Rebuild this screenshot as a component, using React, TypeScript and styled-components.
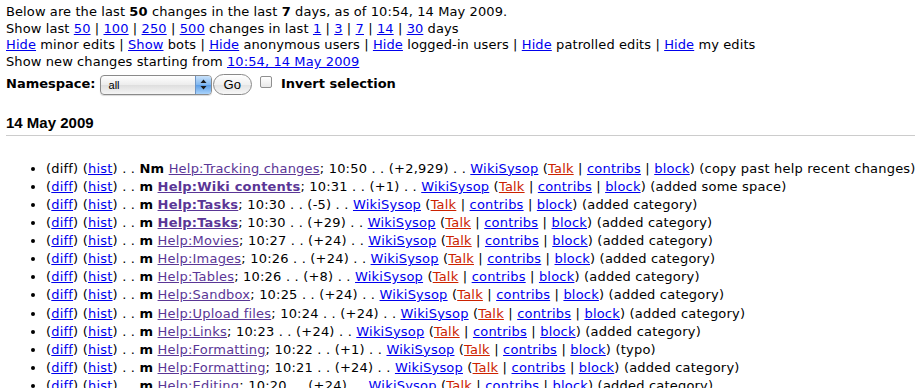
import React from 'react';
import styled, { createGlobalStyle } from 'styled-components';

const GlobalStyle = createGlobalStyle`
  body {
    margin: 0;
    background: #fff;
    font-family: "DejaVu Sans", Verdana, sans-serif;
    color: #000;
  }
`;

const Page = styled.div`
  padding: 4px 6px 0 6px;
  font-size: 13px;
  line-height: 16.7px;
`;

const Line = styled.div`
  white-space: nowrap;
  letter-spacing: 0.1px;
`;

const A = styled.a<{ $kind?: 'visited' | 'new' }>`
  color: ${(p) => (p.$kind === 'visited' ? '#5a3696' : p.$kind === 'new' ? '#cc2200' : '#0000ee')};
  text-decoration: underline;
  cursor: pointer;
`;

const Strong = styled.b`
  font-weight: bold;
`;

const FilterRow = styled.form`
  display: flex;
  align-items: center;
  margin-top: 3px;
  height: 22px;
`;

const Label = styled.label`
  font-weight: bold;
  font-size: 13px;
  margin-right: 4px;
`;

const SelectBox = styled.div`
  display: flex;
  width: 110px;
  height: 18px;
  border: 1px solid #8a8a8a;
  border-radius: 4px;
  overflow: hidden;
  background: linear-gradient(#ffffff, #ececec 50%, #dedede 51%, #f4f4f4);
  box-shadow: 0 1px 1px rgba(0, 0, 0, 0.15);
`;

const SelectText = styled.span`
  flex: 1;
  font-family: "Liberation Sans", Arial, sans-serif;
  font-size: 11px;
  line-height: 19px;
  padding-left: 8px;
`;

const ArrowBox = styled.span`
  width: 15px;
  display: flex;
  align-items: center;
  justify-content: center;
  background: linear-gradient(#c9e2fb, #7fb6ef 50%, #5d9ee6 51%, #a9d3fb);
  border-left: 1px solid #6d94c4;
`;

const GoButton = styled.button`
  height: 21px;
  margin-left: 1px;
  padding: 0 10px;
  border: 1px solid #8a8a8a;
  border-radius: 11px;
  background: linear-gradient(#ffffff, #f0f0f0 50%, #e2e2e2 51%, #f7f7f7);
  font-family: "Liberation Sans", Arial, sans-serif;
  font-size: 13px;
  color: #000;
`;

const Check = styled.span`
  display: inline-block;
  width: 10px;
  height: 10px;
  margin: 0 9px 0 8px;
  border: 1px solid #8f8f8f;
  border-radius: 2px;
  background: linear-gradient(#fff, #e8e8e8);
  position: relative;
  top: -3px;
`;

const CheckLabel = styled.span`
  font-weight: bold;
  font-size: 13px;
`;

const DayHeading = styled.h4`
  margin: 18px 0 0 0;
  font-family: "Liberation Sans", Helvetica, Arial, sans-serif;
  font-size: 15px;
  font-weight: bold;
  line-height: 18px;
  padding-bottom: 3px;
  border-bottom: 1px solid #cccccc;
`;

const ChangeList = styled.ul`
  margin: 24px 0 0 0;
  padding-left: 40px;
  list-style: disc;
  line-height: 18.1px;
`;

const Item = styled.li`
  white-space: nowrap;
  letter-spacing: 0.2px;
`;

type Change = {
  flags: string;
  page: string;
  watched?: boolean;
  time: string;
  diff: string;
  summary: string;
  newPage?: boolean;
};

const changes: Change[] = [
  { flags: 'Nm', page: 'Help:Tracking changes', time: '10:50', diff: '+2,929', summary: 'copy past help recent changes', newPage: true },
  { flags: 'm', page: 'Help:Wiki contents', watched: true, time: '10:31', diff: '+1', summary: 'added some space' },
  { flags: 'm', page: 'Help:Tasks', watched: true, time: '10:30', diff: '-5', summary: 'added category' },
  { flags: 'm', page: 'Help:Tasks', watched: true, time: '10:30', diff: '+29', summary: 'added category' },
  { flags: 'm', page: 'Help:Movies', time: '10:27', diff: '+24', summary: 'added category' },
  { flags: 'm', page: 'Help:Images', time: '10:26', diff: '+24', summary: 'added category' },
  { flags: 'm', page: 'Help:Tables', time: '10:26', diff: '+8', summary: 'added category' },
  { flags: 'm', page: 'Help:Sandbox', time: '10:25', diff: '+24', summary: 'added category' },
  { flags: 'm', page: 'Help:Upload files', time: '10:24', diff: '+24', summary: 'added category' },
  { flags: 'm', page: 'Help:Links', time: '10:23', diff: '+24', summary: 'added category' },
  { flags: 'm', page: 'Help:Formatting', time: '10:22', diff: '+1', summary: 'typo' },
  { flags: 'm', page: 'Help:Formatting', time: '10:21', diff: '+24', summary: 'added category' },
  { flags: 'm', page: 'Help:Editing', time: '10:20', diff: '+24', summary: 'added category' },
];

const Sep = () => <> | </>;

const App: React.FC = () => {
  return (
    <Page>
      <GlobalStyle />
      <Line>
        Below are the last <Strong>50</Strong> changes in the last <Strong>7</Strong> days, as of 10:54, 14 May 2009.
      </Line>
      <Line>
        Show last <A>50</A><Sep /><A>100</A><Sep /><A>250</A><Sep /><A>500</A> changes in last <A>1</A><Sep />
        <A>3</A><Sep /><A>7</A><Sep /><A>14</A><Sep /><A>30</A> days
      </Line>
      <Line>
        <A>Hide</A> minor edits<Sep /><A>Show</A> bots<Sep /><A>Hide</A> anonymous users<Sep />
        <A>Hide</A> logged-in users<Sep /><A>Hide</A> patrolled edits<Sep /><A>Hide</A> my edits
      </Line>
      <Line>
        Show new changes starting from <A>10:54, 14 May 2009</A>
      </Line>
      <FilterRow>
        <Label>Namespace:</Label>
        <SelectBox>
          <SelectText>all</SelectText>
          <ArrowBox>
            <svg width="7" height="11" viewBox="0 0 7 11">
              <path d="M3.5 0.5 L6.5 4 L0.5 4 Z M3.5 10.5 L6.5 7 L0.5 7 Z" fill="#1a1a1a" />
            </svg>
          </ArrowBox>
        </SelectBox>
        <GoButton type="button">Go</GoButton>
        <Check />
        <CheckLabel>Invert selection</CheckLabel>
      </FilterRow>
      <DayHeading>14 May 2009</DayHeading>
      <ChangeList>
        {changes.map((c, i) => (
          <Item key={i}>
            ({c.newPage ? 'diff' : <A>diff</A>}) (<A>hist</A>) . . <Strong>{c.flags}</Strong>{' '}
            <A $kind="visited">{c.watched ? <Strong>{c.page}</Strong> : c.page}</A>; {c.time} . . ({c.diff}) . .{' '}
            <A>WikiSysop</A> (<A $kind="new">Talk</A><Sep /><A>contribs</A><Sep /><A>block</A>) ({c.summary})
          </Item>
        ))}
      </ChangeList>
    </Page>
  );
};

export default App;
